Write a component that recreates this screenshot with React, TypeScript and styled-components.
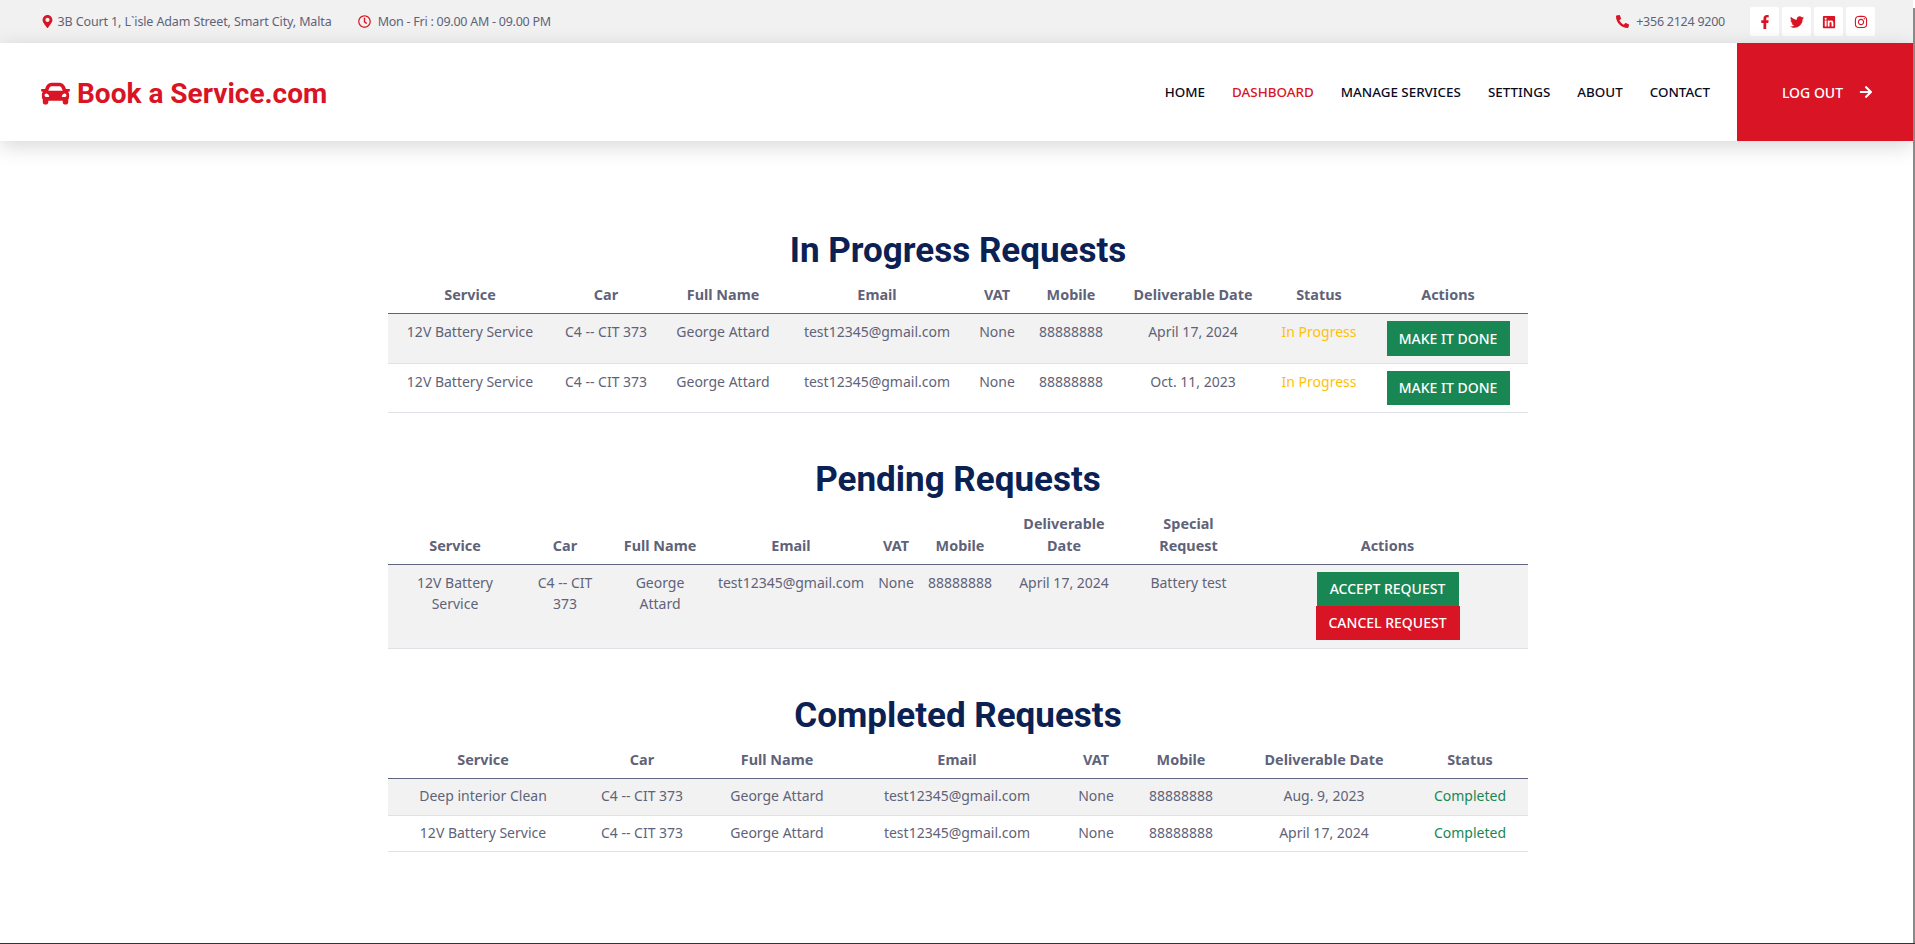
import React from 'react';
import styled, { createGlobalStyle } from 'styled-components';
import {
  FaArrowRight,
  FaCar,
  FaFacebookF,
  FaInstagram,
  FaLinkedin,
  FaMapMarkerAlt,
  FaPhoneAlt,
  FaRegClock,
  FaTwitter,
} from 'react-icons/fa';

const RED = '#d91425';
const GREEN = '#198754';
const TEXT = '#5f6379';

const GlobalStyle = createGlobalStyle`
  html, body {
    margin: 0;
    padding: 0;
    height: 100%;
    overflow: hidden;
    background: #fff;
  }
  body {
    font-family: 'Noto Sans', 'Open Sans', Arial, sans-serif;
    font-size: 14px;
    color: ${TEXT};
  }
  * {
    box-sizing: border-box;
  }
`;

const Page = styled.div`
  position: relative;
  height: 944px;
  padding-right: 2px;
  border-bottom: 1px solid #333;
  overflow: hidden;
`;

const EdgeBar = styled.div`
  position: absolute;
  top: 8px;
  right: 0;
  bottom: 0;
  width: 2px;
  background: #8a8a8a;
`;

const TopBar = styled.div`
  display: flex;
  align-items: center;
  justify-content: space-between;
  height: 43px;
  padding: 0 38px 0 41px;
  background: #f1f1f1;
`;

const TopGroup = styled.div`
  display: flex;
  align-items: center;
`;

const TopItem = styled.span<{ $after?: number; $iconGap?: number; $track?: number }>`
  display: flex;
  align-items: center;
  gap: ${(p) => p.$iconGap ?? 7}px;
  margin-right: ${(p) => p.$after ?? 0}px;
  font-size: 12.5px;
  letter-spacing: ${(p) => p.$track ?? -0.25}px;
  color: ${TEXT};

  svg {
    color: ${RED};
    font-size: 13px;
    flex: none;
  }
`;

const SocialList = styled.div`
  display: flex;
  gap: 3px;
`;

const SocialLink = styled.a`
  display: flex;
  align-items: center;
  justify-content: center;
  width: 29px;
  height: 29px;
  background: #fff;
  border-radius: 2px;
  color: ${RED};
  font-size: 14px;
`;

const NavBar = styled.header`
  display: flex;
  align-items: center;
  justify-content: space-between;
  position: relative;
  height: 98px;
  padding-left: 41px;
  background: #fff;
  box-shadow: 0 5px 20px rgba(0, 0, 0, 0.16);
`;

const Logo = styled.a`
  display: flex;
  align-items: center;
  gap: 7px;
  padding-top: 2px;
  font-family: Roboto, Arial, sans-serif;
  font-size: 28px;
  font-weight: 700;
  color: ${RED};
`;

const NavRight = styled.nav`
  display: flex;
  align-items: stretch;
  height: 100%;
`;

const NavLinks = styled.div`
  display: flex;
  align-items: center;
  gap: 27px;
  margin-right: 27px;
`;

const NavLink = styled.a<{ $active?: boolean }>`
  font-size: 13.4px;
  font-weight: 500;
  text-transform: uppercase;
  color: ${(p) => (p.$active ? RED : '#0a0a1e')};
`;

const LogOut = styled.a`
  display: flex;
  align-items: center;
  justify-content: center;
  gap: 16px;
  width: 176px;
  padding-left: 5px;
  background: ${RED};
  color: #fff;
  font-size: 14px;
  font-weight: 500;
  text-transform: uppercase;
`;

const Main = styled.main`
  width: 1140px;
  margin-left: 388px;
  padding-top: 88px;
`;

const Section = styled.section`
  margin-bottom: 45px;
`;

const Title = styled.h2`
  margin: 0;
  height: 44px;
  font-family: Roboto, Arial, sans-serif;
  font-size: 35px;
  font-weight: 700;
  line-height: 44px;
  text-align: center;
  color: #0b2154;
`;

const Table = styled.table`
  width: 100%;
  border-collapse: collapse;
  table-layout: fixed;
`;

const Th = styled.th`
  padding: 11px 4px 7px;
  border-bottom: 1.5px solid #5f6580;
  vertical-align: bottom;
  font-size: 14.4px;
  font-weight: 700;
  line-height: 22px;
  text-align: center;
  white-space: pre-line;
  color: ${TEXT};
`;

const Tr = styled.tr`
  &:nth-child(odd) {
    background: #f2f2f2;
  }
`;

const Td = styled.td<{ $tone?: string }>`
  padding: 7px 4px 9px;
  border-bottom: 1px solid #dee2e6;
  vertical-align: top;
  font-size: 14px;
  line-height: 21px;
  text-align: center;
  white-space: pre-line;
  color: ${(p) => p.$tone ?? TEXT};
`;

const ActionCell = styled(Td)`
  padding-bottom: 7px;
`;

const CompactCell = styled(Td)`
  padding: 6px 4px 8.5px;
`;

const ButtonStack = styled.div`
  padding-bottom: 1px;
`;

const ActionButton = styled.a<{ $bg: string; $w: number; $h?: number }>`
  display: block;
  width: ${(p) => p.$w}px;
  height: ${(p) => p.$h ?? 34}px;
  margin: 0 auto;
  background: ${(p) => p.$bg};
  font-size: 14px;
  font-weight: 500;
  line-height: ${(p) => p.$h ?? 34}px;
  text-align: center;
  color: #fff;
`;

const progressCols = [164, 108, 126, 182, 58, 90, 154, 98, 160];
const pendingCols = [134, 86, 104, 158, 52, 76, 132, 117, 281];
const completedCols = [190, 128, 142, 218, 60, 110, 176, 116];

const EMAIL = 'test12345@gmail.com';
const CAR = 'C4 -- CIT 373';
const OWNER = 'George Attard';

const Cols = ({ widths }: { widths: number[] }) => (
  <colgroup>
    {widths.map((w, i) => (
      <col key={i} width={w} />
    ))}
  </colgroup>
);

const Head = ({ labels }: { labels: string[] }) => (
  <thead>
    <tr>
      {labels.map((l) => (
        <Th key={l}>{l}</Th>
      ))}
    </tr>
  </thead>
);

const App = () => {
  return (
    <Page>
      <GlobalStyle />
      <TopBar>
        <TopGroup>
          <TopItem $after={26} $iconGap={3.5} $track={-0.12}>
            <FaMapMarkerAlt />
            3B Court 1, L`isle Adam Street, Smart City, Malta
          </TopItem>
          <TopItem>
            <FaRegClock />
            Mon - Fri : 09.00 AM - 09.00 PM
          </TopItem>
        </TopGroup>
        <TopGroup>
          <TopItem $after={25}>
            <FaPhoneAlt />
            +356 2124 9200
          </TopItem>
          <SocialList>
            <SocialLink><FaFacebookF /></SocialLink>
            <SocialLink><FaTwitter /></SocialLink>
            <SocialLink><FaLinkedin /></SocialLink>
            <SocialLink><FaInstagram /></SocialLink>
          </SocialList>
        </TopGroup>
      </TopBar>

      <NavBar>
        <Logo>
          <FaCar size={29} />
          Book a Service.com
        </Logo>
        <NavRight>
          <NavLinks>
            <NavLink>Home</NavLink>
            <NavLink $active>Dashboard</NavLink>
            <NavLink>Manage Services</NavLink>
            <NavLink>Settings</NavLink>
            <NavLink>About</NavLink>
            <NavLink>Contact</NavLink>
          </NavLinks>
          <LogOut>
            Log Out
            <FaArrowRight size={14} />
          </LogOut>
        </NavRight>
      </NavBar>

      <Main>
        <Section>
          <Title>In Progress Requests</Title>
          <Table>
            <Cols widths={progressCols} />
            <Head labels={['Service', 'Car', 'Full Name', 'Email', 'VAT', 'Mobile', 'Deliverable Date', 'Status', 'Actions']} />
            <tbody>
              {[
                { date: 'April 17, 2024', height: 35 },
                { date: 'Oct. 11, 2023', height: 34 },
              ].map(({ date, height }) => (
                <Tr key={date}>
                  <Td>12V Battery Service</Td>
                  <Td>{CAR}</Td>
                  <Td>{OWNER}</Td>
                  <Td>{EMAIL}</Td>
                  <Td>None</Td>
                  <Td>88888888</Td>
                  <Td>{date}</Td>
                  <Td $tone="#ffc107">In Progress</Td>
                  <ActionCell>
                    <ActionButton $bg={GREEN} $w={123} $h={height}>MAKE IT DONE</ActionButton>
                  </ActionCell>
                </Tr>
              ))}
            </tbody>
          </Table>
        </Section>

        <Section>
          <Title>Pending Requests</Title>
          <Table>
            <Cols widths={pendingCols} />
            <Head labels={['Service', 'Car', 'Full Name', 'Email', 'VAT', 'Mobile', 'Deliverable\nDate', 'Special\nRequest', 'Actions']} />
            <tbody>
              <Tr>
                <Td>{'12V Battery\nService'}</Td>
                <Td>{'C4 -- CIT\n373'}</Td>
                <Td>{'George\nAttard'}</Td>
                <Td>{EMAIL}</Td>
                <Td>None</Td>
                <Td>88888888</Td>
                <Td>April 17, 2024</Td>
                <Td>Battery test</Td>
                <ActionCell>
                  <ButtonStack>
                    <ActionButton $bg={GREEN} $w={142}>ACCEPT REQUEST</ActionButton>
                    <ActionButton $bg={RED} $w={144}>CANCEL REQUEST</ActionButton>
                  </ButtonStack>
                </ActionCell>
              </Tr>
            </tbody>
          </Table>
        </Section>

        <Section>
          <Title>Completed Requests</Title>
          <Table>
            <Cols widths={completedCols} />
            <Head labels={['Service', 'Car', 'Full Name', 'Email', 'VAT', 'Mobile', 'Deliverable Date', 'Status']} />
            <tbody>
              {[
                ['Deep interior Clean', 'Aug. 9, 2023'],
                ['12V Battery Service', 'April 17, 2024'],
              ].map(([service, date]) => (
                <Tr key={service}>
                  <CompactCell>{service}</CompactCell>
                  <CompactCell>{CAR}</CompactCell>
                  <CompactCell>{OWNER}</CompactCell>
                  <CompactCell>{EMAIL}</CompactCell>
                  <CompactCell>None</CompactCell>
                  <CompactCell>88888888</CompactCell>
                  <CompactCell>{date}</CompactCell>
                  <CompactCell $tone={GREEN}>Completed</CompactCell>
                </Tr>
              ))}
            </tbody>
          </Table>
        </Section>
      </Main>
      <EdgeBar />
    </Page>
  );
};

export default App;
